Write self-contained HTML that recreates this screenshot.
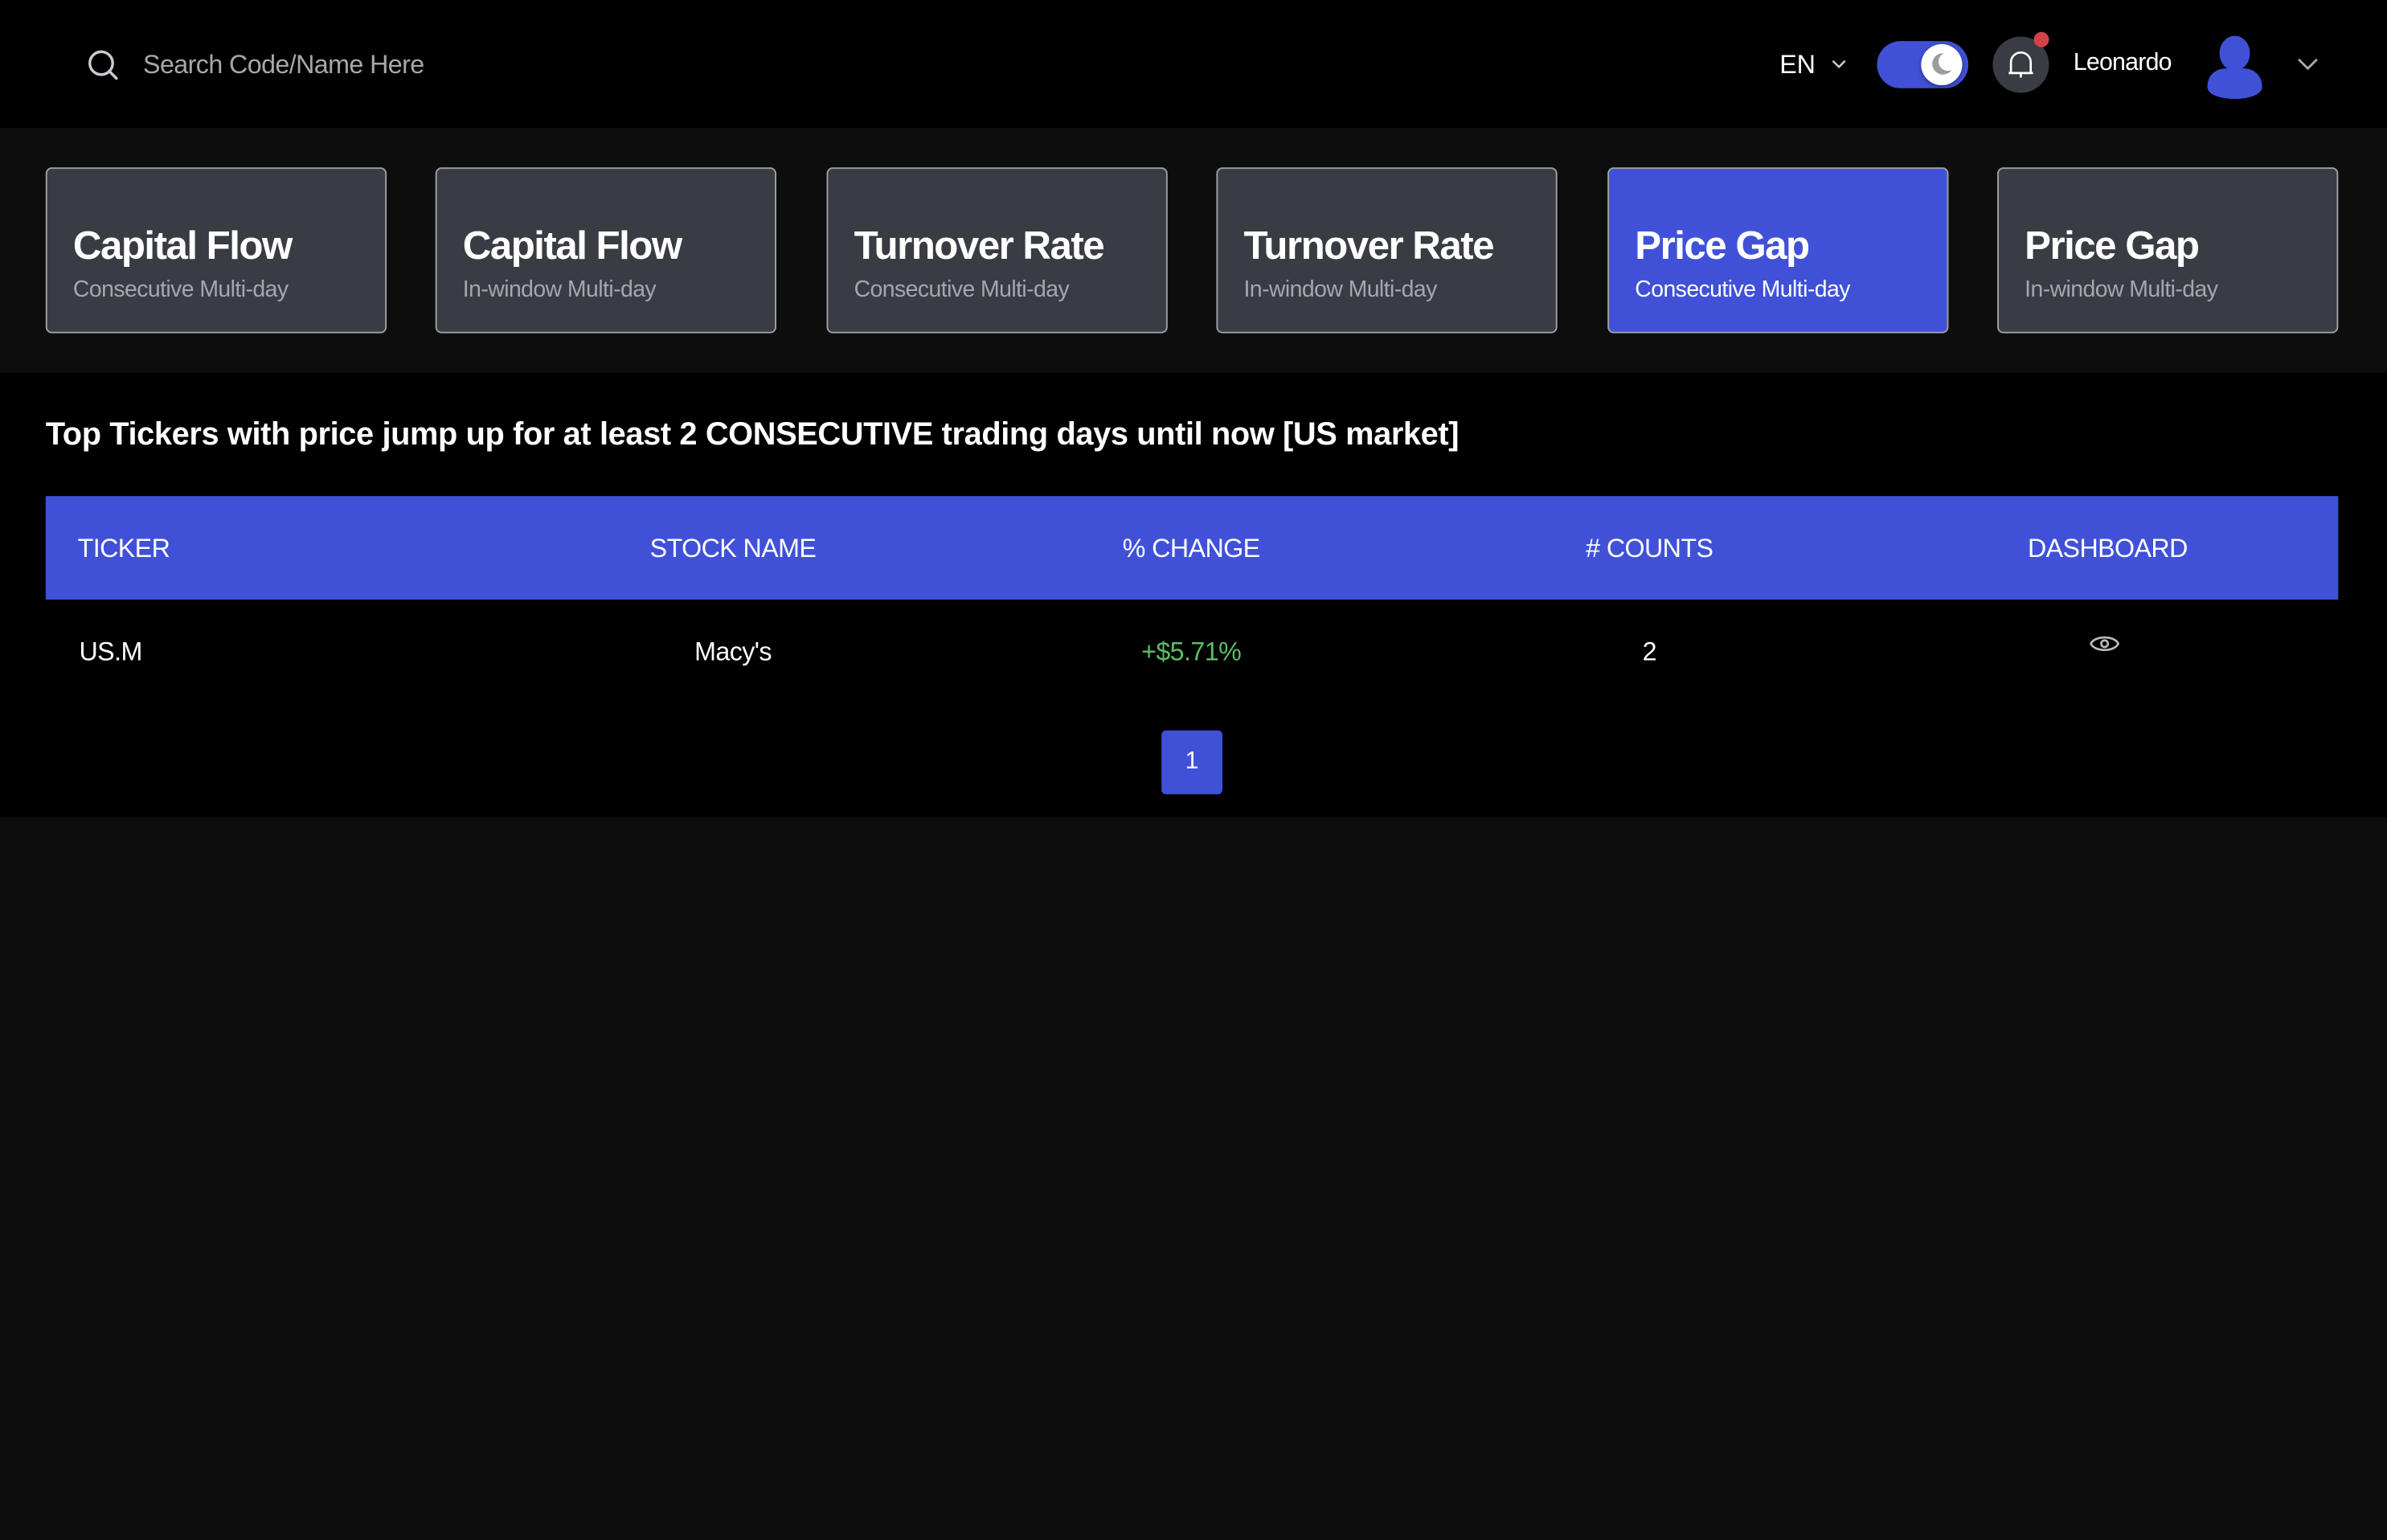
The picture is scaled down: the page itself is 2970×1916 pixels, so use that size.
<!DOCTYPE html>
<html><head><meta charset="utf-8"><style>
html,body{margin:0;padding:0;background:#0d0d0d;width:2970px;height:1916px;overflow:hidden}
#w{width:1568px;height:1012px;transform:scale(1.8941,1.8933);transform-origin:0 0;position:relative;font-family:"Liberation Sans",sans-serif;color:#fff}
.hdr{position:absolute;left:0;top:0;width:1568px;height:84px;background:#000}
.a{position:absolute}
.cards{position:absolute;top:84px;left:0;width:1568px;height:161px;background:#0d0d0d}
.card{position:absolute;top:26px;width:222px;height:107px;background:#393c42;border:1px solid #9ea2a8;border-radius:4px}
.card .t{position:absolute;left:17px;top:35px;font-size:26px;font-weight:bold;letter-spacing:-0.8px;white-space:nowrap}
.card .s{position:absolute;left:17px;top:71px;font-size:15px;letter-spacing:-0.3px;color:#a4a8ae;white-space:nowrap}
.card.on{background:#4051d8}
.card.on .s{color:#fff}
.main{position:absolute;top:245px;left:0;width:1568px;height:292px;background:#000}
.th{position:absolute;left:30px;top:81px;width:1506px;height:68px;background:#4051d8}
.c{position:absolute;width:301px;text-align:center;font-size:17px;letter-spacing:-0.3px;white-space:nowrap}
</style></head><body><div id="w">
<div class="hdr">
<svg class="a" style="left:57px;top:32px" width="22" height="22" viewBox="0 0 22 22"><circle cx="9.5" cy="9.5" r="7.5" fill="none" stroke="#c8cbd0" stroke-width="1.8"/><path d="M15 15l4.5 4.5" stroke="#c8cbd0" stroke-width="1.8" stroke-linecap="round"/></svg>
<div class="a" style="left:94px;top:33px;font-size:17px;letter-spacing:-0.3px;color:#a4a8ae">Search Code/Name Here</div>
<div class="a" style="left:1169px;top:33px;font-size:17px">EN</div>
<svg class="a" style="left:1202px;top:37px" width="12" height="9" viewBox="0 0 12 9"><path d="M2 3l4 4 4-4" fill="none" stroke="#ccc" stroke-width="1.3"/></svg>
<div class="a" style="left:1233px;top:27px;width:60px;height:31px;border-radius:16px;background:#4051d8"></div>
<div class="a" style="left:1262px;top:29px;width:27px;height:27px;border-radius:50%;background:#fff;box-shadow:0 1px 3px rgba(0,0,0,.4)"></div>
<svg class="a" style="left:1266px;top:33px" width="18" height="18" viewBox="0 0 18 18"><path d="M11 2a7 7 0 1 0 5 11a6 6 0 0 1-5-11z" fill="#9a9ca2"/></svg>
<div class="a" style="left:1309px;top:24px;width:37px;height:37px;border-radius:50%;background:#393c42"></div>
<svg class="a" style="left:1317px;top:31px" width="21" height="23" viewBox="0 0 21 23"><path d="M4 17V10a6.5 6.5 0 0 1 13 0v7zM2.5 17h16M10.5 17v3" fill="none" stroke="#fff" stroke-width="1.4"/></svg>
<div class="a" style="left:1336px;top:21px;width:10px;height:10px;border-radius:50%;background:#d2434b"></div>
<div class="a" style="left:1362px;top:33px;font-size:16px;letter-spacing:-0.4px">Leonardo</div>
<svg class="a" style="left:1448px;top:23px" width="40" height="42" viewBox="0 0 40 42"><ellipse cx="20" cy="12" rx="10" ry="11.5" fill="#4051d8"/><path d="M2 34c0-8 6-12 12-12h12c6 0 12 4 12 12c0 5-8 8-18 8S2 39 2 34z" fill="#4051d8"/></svg>
<svg class="a" style="left:1508px;top:36px" width="16" height="12" viewBox="0 0 16 12"><path d="M2 3l6 6 6-6" fill="none" stroke="#aaa" stroke-width="1.5"/></svg>
</div>
<div class="cards">
<div class="card" style="left:30px"><div class="t">Capital Flow</div><div class="s">Consecutive Multi-day</div></div>
<div class="card" style="left:286px"><div class="t">Capital Flow</div><div class="s">In-window Multi-day</div></div>
<div class="card" style="left:543px"><div class="t">Turnover Rate</div><div class="s">Consecutive Multi-day</div></div>
<div class="card" style="left:799px"><div class="t">Turnover Rate</div><div class="s">In-window Multi-day</div></div>
<div class="card on" style="left:1056px"><div class="t">Price Gap</div><div class="s">Consecutive Multi-day</div></div>
<div class="card" style="left:1312px"><div class="t">Price Gap</div><div class="s">In-window Multi-day</div></div>
</div>
<div class="main">
<div class="a" style="left:30px;top:29px;font-size:21px;font-weight:bold;letter-spacing:-0.2px;white-space:nowrap">Top Tickers with price jump up for at least 2 CONSECUTIVE trading days until now [US market]</div>
<div class="th">
<div class="c" style="left:21px;top:25px;text-align:left">TICKER</div>
<div class="c" style="left:301px;top:25px">STOCK NAME</div>
<div class="c" style="left:602px;top:25px">% CHANGE</div>
<div class="c" style="left:903px;top:25px">#  COUNTS</div>
<div class="c" style="left:1204px;top:25px">DASHBOARD</div>
</div>
<div class="c" style="left:52px;top:174px;text-align:left">US.M</div>
<div class="c" style="left:331px;top:174px">Macy's</div>
<div class="c" style="left:632px;top:174px;color:#5bbf63">+$5.71%</div>
<div class="c" style="left:933px;top:174px">2</div>
<svg class="a" style="left:1372px;top:170px" width="21" height="16" viewBox="0 0 21 16"><path d="M1.5 8C4 2.5 17 2.5 19.5 8C17 13.5 4 13.5 1.5 8z" fill="none" stroke="#bbb" stroke-width="1.4"/><circle cx="10.5" cy="8" r="2.2" fill="none" stroke="#bbb" stroke-width="1.4"/></svg>
<div class="a" style="left:763px;top:235px;width:40px;height:42px;background:#4051d8;border-radius:3px;text-align:center;line-height:42px;font-size:16px">1</div>
</div>
</div></body></html>
